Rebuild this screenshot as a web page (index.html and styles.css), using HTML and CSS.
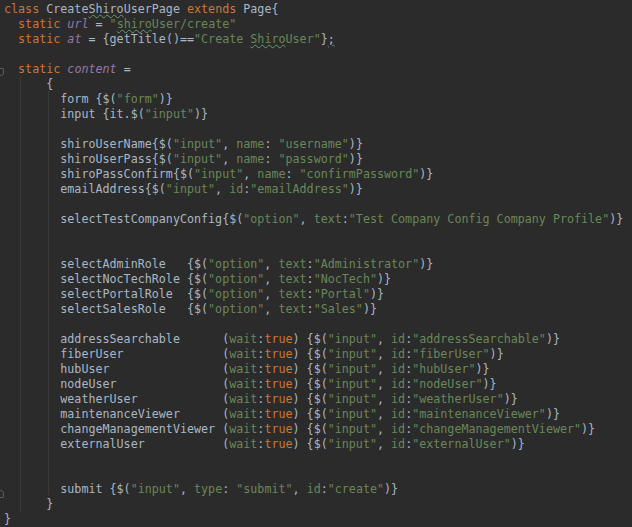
FILE: index.html
```html
<!DOCTYPE html>
<html>
<head>
<meta charset="utf-8">
<link rel="stylesheet" href="styles.css">
</head>
<body>
<div class="editor">
  <span class="guide guide-outer"></span>
  <span class="guide guide-inner"></span>
  <span class="fold fold-top"></span>
  <span class="fold fold-bottom"></span>
  <div class="code">
<div class="ln"><span class="k">class</span> Create<span class="t">Shiro</span>UserPage <span class="k">extends</span> Page{</div>
<div class="ln">  <span class="k">static</span> <span class="f">url</span> = <span class="s">"<span class="t">shiro</span>User/create"</span></div>
<div class="ln">  <span class="k">static</span> <span class="f">at</span> = {getTitle()==<span class="s">"Create <span class="t">Shiro</span>User"</span>}<span class="w">;</span></div>
<div class="ln"> </div>
<div class="ln">  <span class="k">static</span> <span class="f">content</span> =</div>
<div class="ln">      {</div>
<div class="ln">        form {$(<span class="s">"form"</span>)}</div>
<div class="ln">        input {it.$(<span class="s">"input"</span>)}</div>
<div class="ln"> </div>
<div class="ln">        shiroUserName{$(<span class="s">"input"</span>, <span class="n">name</span>: <span class="s">"username"</span>)}</div>
<div class="ln">        shiroUserPass{$(<span class="s">"input"</span>, <span class="n">name</span>: <span class="s">"password"</span>)}</div>
<div class="ln">        shiroPassConfirm{$(<span class="s">"input"</span>, <span class="n">name</span>: <span class="s">"confirmPassword"</span>)}</div>
<div class="ln">        emailAddress{$(<span class="s">"input"</span>, <span class="n">id</span>:<span class="s">"emailAddress"</span>)}</div>
<div class="ln"> </div>
<div class="ln">        selectTestCompanyConfig{$(<span class="s">"option"</span>, <span class="n">text</span>:<span class="s">"Test Company Config Company Profile"</span>)}</div>
<div class="ln"> </div>
<div class="ln"> </div>
<div class="ln">        selectAdminRole   {$(<span class="s">"option"</span>, <span class="n">text</span>:<span class="s">"Administrator"</span>)}</div>
<div class="ln">        selectNocTechRole {$(<span class="s">"option"</span>, <span class="n">text</span>:<span class="s">"NocTech"</span>)}</div>
<div class="ln">        selectPortalRole  {$(<span class="s">"option"</span>, <span class="n">text</span>:<span class="s">"Portal"</span>)}</div>
<div class="ln">        selectSalesRole   {$(<span class="s">"option"</span>, <span class="n">text</span>:<span class="s">"Sales"</span>)}</div>
<div class="ln"> </div>
<div class="ln">        addressSearchable      (<span class="n">wait</span>:<span class="k">true</span>) {$(<span class="s">"input"</span>, <span class="n">id</span>:<span class="s">"addressSearchable"</span>)}</div>
<div class="ln">        fiberUser              (<span class="n">wait</span>:<span class="k">true</span>) {$(<span class="s">"input"</span>, <span class="n">id</span>:<span class="s">"fiberUser"</span>)}</div>
<div class="ln">        hubUser                (<span class="n">wait</span>:<span class="k">true</span>) {$(<span class="s">"input"</span>, <span class="n">id</span>:<span class="s">"hubUser"</span>)}</div>
<div class="ln">        nodeUser               (<span class="n">wait</span>:<span class="k">true</span>) {$(<span class="s">"input"</span>, <span class="n">id</span>:<span class="s">"nodeUser"</span>)}</div>
<div class="ln">        weatherUser            (<span class="n">wait</span>:<span class="k">true</span>) {$(<span class="s">"input"</span>, <span class="n">id</span>:<span class="s">"weatherUser"</span>)}</div>
<div class="ln">        maintenanceViewer      (<span class="n">wait</span>:<span class="k">true</span>) {$(<span class="s">"input"</span>, <span class="n">id</span>:<span class="s">"maintenanceViewer"</span>)}</div>
<div class="ln">        changeManagementViewer (<span class="n">wait</span>:<span class="k">true</span>) {$(<span class="s">"input"</span>, <span class="n">id</span>:<span class="s">"changeManagementViewer"</span>)}</div>
<div class="ln">        externalUser           (<span class="n">wait</span>:<span class="k">true</span>) {$(<span class="s">"input"</span>, <span class="n">id</span>:<span class="s">"externalUser"</span>)}</div>
<div class="ln"> </div>
<div class="ln"> </div>
<div class="ln">        submit {$(<span class="s">"input"</span>, <span class="n">type</span>: <span class="s">"submit"</span>, <span class="n">id</span>:<span class="s">"create"</span>)}</div>
<div class="ln">      }</div>
<div class="ln">}</div>
  </div>
</div>
</body>
</html>
```
FILE: styles.css
```css
html, body {
  margin: 0;
  padding: 0;
  background: #2b2b2b;
  height: 100%;
  overflow: hidden;
}

.editor {
  position: relative;
  height: 100%;
  background: #2b2b2b;
}

.code {
  padding: 2px 0 0 4px;
  font-family: "DejaVu Sans Mono", "Liberation Mono", monospace;
  font-size: 11.7px;
  color: #a9b7c6;
}

.ln {
  white-space: pre;
  height: 15px;
  line-height: 15px;
}

.k { color: #cc7832; }
.s { color: #6a8759; }
.n { color: #6a8759; }
.f { color: #9876aa; font-style: italic; }

.t {
  text-decoration: underline wavy #659c6b;
  text-decoration-thickness: 1px;
  text-underline-offset: 1px;
}

.w {
  text-decoration: underline wavy #7a7a7a;
  text-decoration-thickness: 1px;
  text-underline-offset: 1px;
}

.guide {
  position: absolute;
  width: 1px;
  background: #393939;
}

.guide-outer {
  left: 20px;
  top: 76px;
  height: 436px;
}

.guide-inner {
  left: 48px;
  top: 91px;
  height: 404px;
}

.fold {
  position: absolute;
  left: -2px;
  width: 6px;
  height: 8px;
  border: 1px solid #5a5a5a;
  box-sizing: border-box;
}

.fold-top {
  top: 68px;
  border-radius: 0 0 3px 3px;
}

.fold-bottom {
  top: 490px;
  border-radius: 3px 3px 0 0;
}
```
